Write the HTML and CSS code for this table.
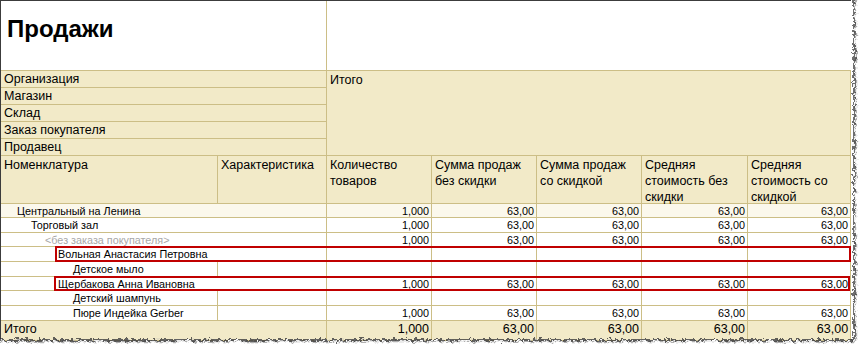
FILE: index.html
```html
<!DOCTYPE html>
<html lang="ru">
<head>
<meta charset="utf-8">
<title>Продажи</title>
<link rel="stylesheet" href="styles.css">
</head>
<body>
<div class="sheet">
  <table class="report">
    <colgroup>
      <col class="c-nom"><col class="c-char"><col class="c-num"><col class="c-num"><col class="c-num"><col class="c-num6"><col class="c-num7">
    </colgroup>
    <tbody>
      <tr class="r-title">
        <td colspan="2" class="title">Продажи</td>
        <td colspan="5" class="title-right"></td>
      </tr>
      <tr class="r-param"><td colspan="2">Организация</td><td colspan="5" rowspan="5" class="total-head">Итого</td></tr>
      <tr class="r-param"><td colspan="2">Магазин</td></tr>
      <tr class="r-param"><td colspan="2">Склад</td></tr>
      <tr class="r-param"><td colspan="2">Заказ покупателя</td></tr>
      <tr class="r-param"><td colspan="2">Продавец</td></tr>
      <tr class="r-cols">
        <td><div class="hd">Номенклатура</div></td>
        <td><div class="hd">Характеристика</div></td>
        <td><div class="hd">Количество<br>товаров</div></td>
        <td><div class="hd">Сумма продаж<br>без скидки</div></td>
        <td><div class="hd">Сумма продаж<br>со скидкой</div></td>
        <td><div class="hd">Средняя<br>стоимость без<br>скидки</div></td>
        <td><div class="hd">Средняя<br>стоимость со<br>скидкой</div></td>
      </tr>
      <tr class="r-data h14 group1">
        <td colspan="2" class="l1">Центральный на Ленина</td>
        <td class="num">1,000</td><td class="num">63,00</td><td class="num">63,00</td><td class="num">63,00</td><td class="num">63,00</td>
      </tr>
      <tr class="r-data h15">
        <td colspan="2" class="l2">Торговый зал</td>
        <td class="num">1,000</td><td class="num">63,00</td><td class="num">63,00</td><td class="num">63,00</td><td class="num">63,00</td>
      </tr>
      <tr class="r-data h14">
        <td colspan="2" class="l3 muted">&lt;без заказа покупателя&gt;</td>
        <td class="num">1,000</td><td class="num">63,00</td><td class="num">63,00</td><td class="num">63,00</td><td class="num">63,00</td>
      </tr>
      <tr class="r-data h15">
        <td colspan="2" class="l4 marked"><span class="flag flag-a"></span>Вольная Анастасия Петровна</td>
        <td class="num"></td><td class="num"></td><td class="num"></td><td class="num"></td><td class="num"></td>
      </tr>
      <tr class="r-data h15">
        <td class="l5">Детское мыло</td><td></td>
        <td class="num"></td><td class="num"></td><td class="num"></td><td class="num"></td><td class="num"></td>
      </tr>
      <tr class="r-data h14">
        <td colspan="2" class="l4 marked"><span class="flag flag-b"></span>Щербакова Анна Ивановна</td>
        <td class="num">1,000</td><td class="num">63,00</td><td class="num">63,00</td><td class="num">63,00</td><td class="num">63,00</td>
      </tr>
      <tr class="r-data h15">
        <td class="l5">Детский шампунь</td><td></td>
        <td class="num"></td><td class="num"></td><td class="num"></td><td class="num"></td><td class="num"></td>
      </tr>
      <tr class="r-data h15">
        <td class="l5">Пюре Индейка Gerber</td><td></td>
        <td class="num">1,000</td><td class="num">63,00</td><td class="num">63,00</td><td class="num">63,00</td><td class="num">63,00</td>
      </tr>
      <tr class="r-total">
        <td colspan="2">Итого</td>
        <td class="num">1,000</td><td class="num">63,00</td><td class="num">63,00</td><td class="num">63,00</td><td class="num">63,00</td>
      </tr>
    </tbody>
  </table>
  <svg class="torn" width="859" height="344" viewBox="0 0 859 344" aria-hidden="true">
    <defs>
      <filter id="rip" filterUnits="userSpaceOnUse" x="-20" y="-20" width="920" height="400">
        <feTurbulence type="fractalNoise" baseFrequency="0.28" numOctaves="2" seed="5" result="noise"/>
        <feDisplacementMap in="SourceGraphic" in2="noise" scale="7" xChannelSelector="R" yChannelSelector="G"/>
      </filter>
    </defs>
    <g filter="url(#rip)">
      <path d="M854 -10 V340 H-10 V380 H900 V-10 Z" fill="#ffffff" stroke="none"/>
    </g>
    <g filter="url(#rip)" transform="translate(1.5 1.5)">
      <path d="M854 -10 V340 H-10" fill="none" stroke="#b0b0b0" stroke-width="1.4"/>
    </g>
    <g filter="url(#rip)">
      <path d="M854 -10 V340 H-10" fill="none" stroke="#333333" stroke-width="1.4"/>
    </g>
  </svg>
</div>
</body>
</html>
```
FILE: styles.css
```css
* {
  box-sizing: border-box;
}

html,
body {
  margin: 0;
  padding: 0;
  background: #ffffff;
}

body {
  font-family: "Liberation Sans", Arial, sans-serif;
  color: #000000;
}

.sheet {
  position: relative;
  width: 859px;
  height: 344px;
  overflow: hidden;
}

.report {
  border-collapse: separate;
  border-spacing: 0;
  table-layout: fixed;
  width: 851px;
  border-left: 1px solid #3c3c3c;
  border-top: 1px solid #3c3c3c;
}

.c-nom { width: 217px; }
.c-char { width: 109px; }
.c-num { width: 105px; }
.c-num6 { width: 106px; }
.c-num7 { width: 103px; }

.report td {
  padding: 0 3px;
  border-right: 1px solid #ccbe86;
  border-bottom: 1px solid #ccbe86;
  vertical-align: middle;
  white-space: nowrap;
  overflow: visible;
}

/* title */
.report .r-title td {
  height: 70px;
  background: #ffffff;
  vertical-align: top;
}

.report .title {
  padding: 14px 0 0 6px;
  font-size: 24px;
  font-weight: bold;
  line-height: 28px;
}

.report .title-right {
  border-right: none;
}

/* parameter rows */
.report .r-param td {
  height: 17px;
  background: #f2eac8;
  font-size: 12.5px;
  line-height: 16px;
}

.report .total-head {
  vertical-align: top;
  padding-top: 1px;
}

/* column headers */
.report .r-cols td {
  height: 48px;
  background: #f2eac8;
  font-size: 12.5px;
  line-height: 16px;
  vertical-align: top;
  padding-top: 0;
}

.hd {
  height: 46px;
  padding-top: 1px;
}

/* data rows */
.report .r-data td {
  font-size: 10.8px;
  line-height: 12px;
  background: #ffffff;
}

.report .h14 td { height: 14px; }
.report .h15 td { height: 15px; }

.report .group1 td {
  background: #fbf8ec;
}

.report .l1 { padding-left: 16px; }
.report .l2 { padding-left: 30px; }
.report .l3 { padding-left: 44px; }
.report .l4 { padding-left: 57px; }
.report .l5 { padding-left: 72px; }

.muted {
  color: #a8a8a8;
}

.report .num {
  text-align: right;
  padding-right: 2px;
}

/* red highlight frames */
.marked {
  position: relative;
}

.flag {
  position: absolute;
  top: -1px;
  border: 2px solid #c00000;
  pointer-events: none;
}

.flag-a {
  left: 54px;
  width: 796px;
  height: 16px;
}

.flag-b {
  left: 53px;
  width: 796px;
  height: 15px;
}

/* totals row */
.report .r-total td {
  height: 20px;
  background: #f2eac8;
  font-size: 12.5px;
  line-height: 15px;
  vertical-align: top;
  padding-top: 1px;
}

/* torn paper edge */
.torn {
  position: absolute;
  left: 0;
  top: 0;
  pointer-events: none;
}
```
